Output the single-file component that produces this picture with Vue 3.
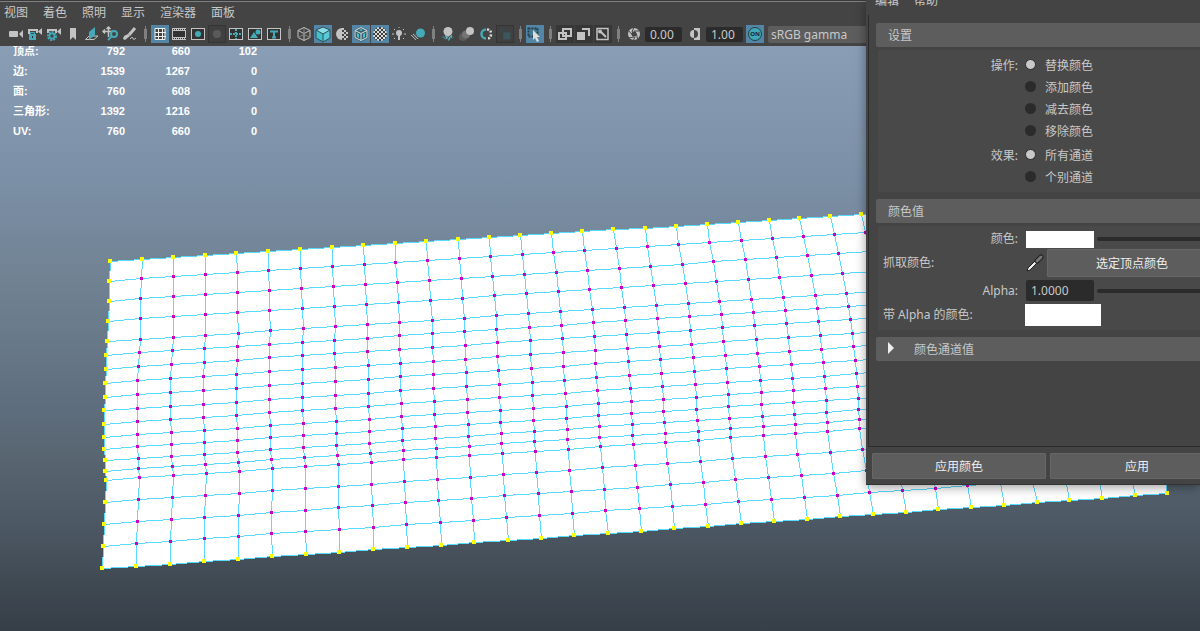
<script setup>
import { ref } from 'vue'

const menus = ['视图', '着色', '照明', '显示', '渲染器', '面板']

const G = '#c3c3c3'
const T = '#45aab8'
const D = '#2b2b2b'
const frame = `<rect x="2.5" y="3.5" width="13" height="11" fill="#333" stroke="${G}"/>`
const wire = (c) => `<path d="M9 2.5 15 5.5V12.5L9 15.5 3 12.5V5.5ZM3 5.5 9 8.5 15 5.5M9 8.5V15.5" fill="none" stroke="${c}"/>`

const groups = [
  [
    { n: '选择摄影机', s: `<rect x="2" y="6" width="9" height="6" rx="1" fill="${G}"/><path d="M16 5v8l-4-4z" fill="${G}"/>` },
    { n: '锁定摄影机', s: `<path d="M3 9V5h8v3" fill="none" stroke="${G}" stroke-width="2"/><path d="M16 3v7l-4-3.500z" fill="${G}"/><rect x="3" y="9" width="7" height="6" fill="${T}"/><path d="M4.500 9V7.500h4V9" fill="none" stroke="${T}"/><rect x="6" y="11" width="1" height="2" fill="${D}"/>` },
    { n: '摄影机属性', s: `<path d="M3 8V5h8v3" fill="none" stroke="${G}" stroke-width="2"/><path d="M16 3v7l-4-3.500z" fill="${G}"/><circle cx="7" cy="11" r="4" fill="#444" stroke="${T}" stroke-width="2" stroke-dasharray="2 1"/><circle cx="7" cy="11" r="2.500" fill="none" stroke="${T}" stroke-width="1.500"/>` },
    { n: '书签', s: `<path d="M6 3h6v12l-3-3-3 3z" fill="${G}"/>` },
    { n: '图像平面', s: `<path d="M2.500 14.500 6 11h9l-4 3.500z" fill="none" stroke="${G}"/><path d="M6 7 12 2v8l-6 5z" fill="${T}"/>` },
    { n: '二维平移/缩放', s: `<path d="M1 6.500h10M6.500 2v10M4.500 4l2-2 2 2M3 4.500l-2 2 2 2" fill="none" stroke="${G}" stroke-width="1.500"/><circle cx="12" cy="9" r="3" fill="#444" stroke="${T}" stroke-width="2"/><path d="m10 11-4 4" stroke="${T}" stroke-width="2"/>` },
    { n: '油性铅笔', s: `<path d="M14 3 8 10" stroke="${G}" stroke-width="3"/><path d="m7 9 2 2-5 4-2-1 1-3z" fill="${G}"/><path d="M9 14q2-3 3-1 0 3 3 0" fill="none" stroke="${G}"/>` }
  ],
  [
    { n: '栅格', on: 1, s: `<path d="M4 3.500h10v11H4zM7.500 3v12M11.500 3v12M4 7.500h11M4 11.500h11" fill="#414141" stroke="#eee"/>` },
    { n: '胶片门', s: `<rect x="2" y="3" width="14" height="12" fill="${G}"/><rect x="3" y="6" width="12" height="6" fill="#333"/><path d="M3 4.500h13M3 13.500h13" stroke="#333" stroke-dasharray="1 1"/>` },
    { n: '分辨率门', s: frame + `<circle cx="9" cy="9" r="3" fill="${T}"/>` },
    { n: '门遮罩', off: 1, s: `<circle cx="9" cy="9" r="4.500" fill="#5a5a5a"/>` },
    { n: '区域图', s: frame + `<path d="M9 4v10M3 9h12" stroke="${T}" stroke-width="2" stroke-dasharray="2 1"/>` },
    { n: '安全动作', s: frame + `<circle cx="12" cy="7" r="2.500" fill="${T}"/><path d="m4 13 4-6 4 6z" fill="${T}"/>` },
    { n: '安全标题', s: frame + `<path d="M5 6.500h8M9 6v7M7 12.500h4" fill="none" stroke="${T}" stroke-width="2"/>` }
  ],
  [
    { n: '线框', s: wire(G) + `<path d="m3 12.500 6-3 6 3M9 3v6" fill="none" stroke="#858585"/>` },
    { n: '着色显示', on: 1, s: `<path d="m9 2 7 3-7 4-7-4z" fill="#88dce6"/><path d="m2 5 7 4v8l-7-4z" fill="#45bfcb"/><path d="m16 5-7 4v8l7-4z" fill="#59cbd6"/><path d="m9 2 7 3v8l-7 4-7-4V5ZM2 5l7 4 7-4M9 9v8" fill="none" stroke="#30515b"/>` },
    { n: '默认材质', s: `<path d="M9 3a6 6 0 0 0 0 12z" fill="${G}"/><path d="M9 3h2v2H9zm2 2h2v2h-2zM9 7h2v2H9zm4 0h2v2h-2zm-2 2h2v2h-2zm-2 2h2v2H9zm4 0h2v2h-2zm-2 2h2v2h-2z" fill="${G}"/>` },
    { n: '着色线框', on: 1, s: `<path d="m9 2 7 3v8l-7 4-7-4V5z" fill="#37616c"/>` + wire('#ddd') + `<path d="m7 5 2-1 2 1-2 1zM5 8l2 1v4l-2-1zm6 1 2-1v4l-2 1z" fill="#45bfcb"/>` },
    { n: '纹理', on: 1, s: `<defs><pattern id="check" width="4" height="4" patternUnits="userSpaceOnUse"><rect width="4" height="4" fill="#3a3a3a"/><path d="M0 0h2v2H0zM2 2h2v2H2z" fill="#ddd"/></pattern></defs><circle cx="9" cy="9" r="7" fill="url(#check)"/>` },
    { n: '使用所有灯光', s: `<circle cx="9" cy="8" r="3" fill="${G}"/><path d="M8 10h2v5H8z" fill="${G}"/><path d="M2 9h2M14 9h2M4 4l1 1M14 4l-1 1M4 14l1-1M14 14l-1-1M9 2v1" stroke="${G}"/>` },
    { n: '阴影', s: `<path d="m2 10 4-2 4 6H6z" fill="#555"/><path d="m2 10 5 5M4 9l5 5" stroke="#aaa"/><circle cx="11.500" cy="8" r="4.500" fill="${T}"/>` }
  ],
  [
    { n: '屏幕空间环境光遮挡', s: `<path d="m3 12 6-2 6 2-6 4z" fill="${T}"/><path d="m4 14 2-3 2 5 2-5 2 4 2-4" stroke="#444" fill="none"/><circle cx="9" cy="6.500" r="4.500" fill="${G}"/><path d="M6 11h1m2 0h1m2 0h1M7 13h1m2 0h1" stroke="${G}"/>` },
    { n: '运动模糊', s: `<circle cx="5" cy="12" r="4" fill="#5c5c5c"/><circle cx="8" cy="9.500" r="4" fill="#747474"/><circle cx="12" cy="6" r="4" fill="${G}"/>` },
    { n: '多采样抗锯齿', s: `<path d="M9 4.500a4.500 4.500 0 0 0 0 9" fill="none" stroke="${T}" stroke-width="2.500"/><path d="M10 4.500q4 0 4 4.500t-4 4.500" fill="none" stroke="#ddd" stroke-width="2.500" stroke-dasharray="2 1.500"/>` },
    { n: '景深', off: 1, s: `<path d="M3 8V3h6v2H5v3z" fill="#384a4f"/><path d="M7 7h8v8H7z" fill="#3a575d"/>` }
  ],
  [
    { n: '隔离选择', on: 1, s: `<rect x="2.500" y="3.500" width="9" height="8" fill="none" stroke="#263a45" stroke-width="2" stroke-dasharray="2 1"/><rect x="4" y="5" width="6" height="5" fill="#427d93"/><path d="M7 5v10l2-2 2 4 2-1-2-4h3z" fill="#ddd"/>` }
  ],
  [
    { n: 'X 射线显示', dk: 1, s: `<path d="M7 4h8v7H7z" fill="none" stroke="${G}" stroke-width="2"/><path d="M3 8h7v6H3z" fill="none" stroke="${G}" stroke-width="2"/>` },
    { n: 'X 射线活动组件', dk: 1, s: `<path d="M7 4h7v7" fill="none" stroke="${G}" stroke-width="2"/><path d="M2 7h8v8H2z" fill="${G}"/>` },
    { n: 'X 射线关节', dk: 1, s: `<path d="M3 3.500h11v11H3z" fill="none" stroke="${G}" stroke-width="1.500"/><circle cx="6" cy="6.500" r="2" fill="${G}"/><path d="m6 6 6 6" stroke="${G}" stroke-width="2"/>` }
  ]
]

const aperture = `<circle cx="10" cy="9" r="6" fill="${G}"/><path d="M10 6h5M12.500 9l1 5M10 12l-5 1M7.500 9 4 5M8 7l2-5M11 12l-2 4" stroke="#444"/><path d="m8.500 6.500 3 0 1.500 2.500-1.500 2.500h-3L7 9z" fill="#444"/>`
const contrast = `<path d="M9 3h6v12H9z" fill="${G}"/><path d="M9 5a4 4 0 0 0 0 8z" fill="${G}"/><path d="M9 5a4 4 0 0 1 0 8z" fill="#444"/>`

const stats = [
  ['顶点:', 792, 660, 102],
  ['边:', 1539, 1267, 0],
  ['面:', 760, 608, 0],
  ['三角形:', 1392, 1216, 0],
  ['UV:', 760, 660, 0]
]

/* Mesh loops in viewport pixels; the loops between two of them are interpolated. */
const top = 46
const loop = (i, ox, oy, xs, ys) => ({ i, p: xs.map((x, k) => [ox + x / 3, oy + ys[k] / 3 - top]) })
const loops = [
  loop(0, 90, 240, [59,57,57,54,51,48,48,45,45,42,42,42,42,45,45,48,45,42,39,36], [63,123,183,243,303,345,387,429,471,510,551,591,627,660,692,720,786,852,917,984]),
  loop(1, 90, 240, [155,154,151,151,151,148,145,142,142,142,142,142,142,145,145,148,145,142,139,138], [57,115,175,235,298,337,379,421,463,505,544,583,619,655,685,712,778,844,910,978]),
  loop(5, 90, 240, [534,535,538,538,541,538,538,538,538,538,538,541,541,541,544,547,547,544,544,545], [33,91,151,211,271,313,352,394,436,478,517,556,592,628,658,685,751,817,880,948]),
  loop(9, 90, 240, [915,916,922,925,928,928,928,931,931,931,934,934,937,937,940,940,943,946,949,951], [9,67,127,187,247,286,328,370,409,451,490,529,565,601,631,658,724,787,853,921]),
  loop(12, 400, 210, [267,271,277,283,289,289,292,292,295,298,298,301,301,304,304,307,310,313,319,323], [81,139,199,256,316,358,397,439,481,523,562,601,637,670,700,730,793,856,922,990]),
  loop(15, 400, 210, [546,553,562,568,577,580,583,586,586,589,592,595,595,598,598,601,607,613,616,623], [63,121,181,238,298,337,379,421,460,502,541,580,616,649,682,709,772,838,901,969]),
  loop(19, 700, 200, [21,28,40,49,58,64,67,70,76,79,82,85,85,88,91,91,97,106,115,123], [72,127,184,244,304,343,382,424,466,505,547,583,619,655,685,712,775,838,904,969]),
  loop(23, 700, 200, [390,403,415,427,439,445,451,457,460,466,469,472,475,475,478,478,487,498,508,519], [48,103,160,220,280,319,358,400,439,481,520,559,595,628,658,685,748,811,877,942])
]
const edge = loops[loops.length - 1].p
loops.push({ i: 32, p: edge.map(([x, y], k) => [x + 9 * (31 + k * 0.09), y - 9 * (2 + k * 0.018)]) })

const cols = []
for (let c = 0; c <= 32; c++) {
  const b = loops.find((l) => l.i >= c)
  const a = b.i === c ? b : loops[loops.indexOf(b) - 1]
  const t = b === a ? 0 : (c - a.i) / (b.i - a.i)
  cols.push(a.p.map(([x, y], k) => [
    Math.round(x + (b.p[k][0] - x) * t),
    Math.round(y + (b.p[k][1] - y) * t)
  ]))
}
const line = (pts) => 'M' + pts.map(([x, y]) => `${x + 0.5} ${y + 0.5}`).join('L')
const rows = cols[0].map((_, k) => cols.map((c) => c[k]))
const wires = [...cols, ...rows].map(line).join('')
const outline = line([...rows[0], ...cols[32], ...[...rows[19]].reverse(), ...[...cols[0]].reverse()]) + 'Z'
let inner = ''
let border = ''
cols.forEach((c, i) => c.forEach(([x, y], k) => {
  if (i === 0 || i === 32 || k === 0 || k === 19) border += `M${x - 2} ${y - 2}h4v4h-4z`
  else inner += `M${x - 1} ${y - 1}h3v3h-3z`
}))

const operation = ref('替换颜色')
const channel = ref('所有通道')
const operations = ['替换颜色', '添加颜色', '减去颜色', '移除颜色']
const channels = ['所有通道', '个别通道']
</script>

<template>
  <div class="app">
    <nav class="menubar">
      <button v-for="m in menus" :key="m">{{ m }}</button>
    </nav>
    <div class="toolbar">
      <template v-for="(g, i) in groups" :key="i">
        <button v-for="b in g" :key="b.n" class="tool" :class="{ on: b.on, off: b.off, dark: b.dk }" :aria-label="b.n">
          <svg viewBox="0 0 18 18" v-html="b.s"></svg>
        </button>
        <span class="sep"></span>
      </template>
      <button class="tool" aria-label="曝光"><svg viewBox="0 0 18 18" v-html="aperture"></svg></button>
      <input class="num" value="0.00" aria-label="曝光值" />
      <button class="tool" aria-label="伽马"><svg viewBox="0 0 18 18" v-html="contrast"></svg></button>
      <input class="num" value="1.00" aria-label="伽马值" />
      <button class="tool on cm" aria-label="颜色管理"><span>ON</span></button>
      <select class="view" aria-label="视图变换"><option>sRGB gamma</option></select>
    </div>

    <main class="viewport">
      <svg class="mesh" shape-rendering="crispEdges" aria-label="多边形网格">
        <path :d="outline" fill="#fff" />
        <path :d="wires" fill="none" stroke="#5adaff" />
        <path :d="inner" fill="#c800c8" />
        <path :d="border" fill="#ff0" />
      </svg>
      <table class="stats">
        <tbody>
          <tr v-for="s in stats" :key="s[0]">
            <th scope="row">{{ s[0] }}</th>
            <td v-for="n in 3" :key="n">{{ s[n] }}</td>
          </tr>
        </tbody>
      </table>
    </main>

    <aside class="dialog">
      <nav class="dialog-menu">
        <button>编辑</button>
        <button>帮助</button>
      </nav>
      <div class="scroll">
        <h2>设置</h2>
        <section class="body settings">
          <div class="group" role="radiogroup" aria-label="操作">
            <span class="label">操作:</span>
            <div class="choices">
              <label v-for="o in operations" :key="o"><input v-model="operation" type="radio" name="operation" :value="o" />{{ o }}</label>
            </div>
          </div>
          <div class="group" role="radiogroup" aria-label="效果">
            <span class="label">效果:</span>
            <div class="choices">
              <label v-for="o in channels" :key="o"><input v-model="channel" type="radio" name="channel" :value="o" />{{ o }}</label>
            </div>
          </div>
        </section>

        <h2>颜色值</h2>
        <section class="body values">
          <div class="row r1">
            <span class="label">颜色:</span>
            <button class="swatch" aria-label="颜色"></button>
            <input class="slider" type="range" aria-label="颜色亮度" value="100" />
          </div>
          <div class="row r2">
            <span class="label start">抓取颜色:</span>
            <svg class="dropper" viewBox="0 0 20 20">
              <path d="M2 18 3 15 11 7l2 2-8 8z" fill="#eee" stroke="#222" />
              <path d="m11 6 3 3" stroke="#222" stroke-width="3" />
              <path d="m12 8 4-4" stroke="#222" stroke-width="5" stroke-linecap="round" />
              <path d="m12 8 4-4" stroke="#777" stroke-width="3" stroke-linecap="round" />
            </svg>
            <button class="btn pick">选定顶点颜色</button>
          </div>
          <div class="row r3">
            <label class="label" for="alpha">Alpha:</label>
            <input id="alpha" class="alpha" value="1.0000" />
            <input class="slider" type="range" aria-label="Alpha 滑块" value="100" />
          </div>
          <div class="row r4">
            <span class="label start">带 Alpha 的颜色:</span>
            <span class="preview"></span>
          </div>
        </section>

        <h2 class="closed">
          <svg viewBox="0 0 6 12"><path d="M0 0 6 6 0 12z" fill="#eee" /></svg>颜色通道值
        </h2>
      </div>
      <footer>
        <button class="btn">应用颜色</button>
        <button class="btn">应用</button>
      </footer>
    </aside>
  </div>
</template>

<style>
body { background: #444; }
</style>

<style scoped>
.app {
  position: relative;
  display: flex;
  flex-direction: column;
  height: 100vh;
  overflow: hidden;
  background: #444;
  color: #c8c8c8;
  font: 12px/20px "Noto Sans", "Noto Sans CJK SC", sans-serif;
}
.app *, .app { box-sizing: border-box; }
button, input, select { margin: 0; padding: 0; border: 0; font: inherit; color: inherit; background: none; }
.menubar {
  flex: none;
  display: flex;
  gap: 15px;
  height: 24px;
  padding: 1px 4px 0;
  border-top: 1px solid #3a3a3a;
  box-shadow: inset 0 1px #808080;
}
.toolbar { flex: none; display: flex; align-items: center; gap: 1px; height: 22px; padding: 0 0 2px 7px; }
.tool { flex: none; width: 18px; height: 18px; }
.tool svg { display: block; width: 18px; height: 18px; }
.on { background: #5285a6; }
.dark { background: #373737; }
.off { background: #404040; border: 1px solid #353535; }
.off svg { width: 16px; height: 16px; }
.sep {
  flex: none;
  width: 10px;
  height: 16px;
  background: linear-gradient(#808080, #808080) center / 3px 10px no-repeat, linear-gradient(#808080, #808080) center / 1px 16px no-repeat;
}
.num { flex: none; width: 37px; height: 15px; margin: 0 2px; padding-left: 5px; border-radius: 2px; background: #2b2b2b; line-height: 15px; }
.cm { display: grid; place-items: center; }
.cm span { width: 14px; height: 14px; border: 1px solid #263c45; border-radius: 50%; background: #3fa9b8; color: #223; font-size: 6px; font-weight: bold; line-height: 12px; }
.view { flex: 1; height: 17px; margin-left: 3px; padding-left: 3px; border-radius: 2px; background: #5d5d5d; appearance: none; line-height: 17px; }
.viewport {
  position: relative;
  flex: 1;
  min-height: 0;
  clip-path: inset(0);
  background: linear-gradient(#899db5, #7b8fa6 23%, #6e808f 43%, #606f80 60%, #586672 70%, #4d5965 81%, #3f4952 92%, #363e48);
}
.mesh { position: absolute; inset: 0; width: 100%; height: 100%; }
.stats { position: relative; margin-top: -5px; border-collapse: collapse; color: #fff; font: bold 11px/20px "Liberation Sans", "Noto Sans CJK SC", sans-serif; }
.stats th { width: 60px; height: 20px; padding: 0 0 0 13px; text-align: left; white-space: nowrap; }
.stats td { width: 65px; padding: 0; text-align: right; }
.stats td:last-child { width: 67px; }

.dialog {
  position: absolute;
  top: 0;
  right: 0;
  left: 866px;
  overflow: hidden;
  padding-left: 2px;
  border-bottom: 1px solid #333;
  background: #444;
  box-shadow: 0 2px 10px rgba(0, 0, 0, 0.4);
}
.dialog-menu { display: flex; gap: 15px; height: 24px; margin-top: -9px; padding-left: 7px; }
.dialog-menu button { height: 20px; }
.scroll { height: 432px; padding: 8px 0 0 7px; border: 1px solid #2b2b2b; border-width: 0 0 1px 1px; }
h2 { display: flex; align-items: center; height: 24px; margin: 0; padding: 2px 0 0 12px; border-radius: 2px 0 0 2px; background: #5d5d5d; font-size: 12px; font-weight: normal; }
.body { margin: 3px 0 7px 2px; background: #494949; }
.settings { display: grid; gap: 2px; padding: 4px 0; }
.group { display: flex; line-height: 22px; }
.label { flex: none; width: 140px; text-align: right; }
.group .label { padding-top: 1px; }
.choices { margin-left: 7px; }
.choices label { display: flex; align-items: center; height: 22px; padding-top: 2px; }
.choices input { width: 11px; height: 11px; margin: 0 9px 4px 0; border-radius: 50%; background: #2b2b2b; appearance: none; }
.choices input:checked { border: 1px solid #2b2b2b; background: #c8c8c8; }
.values { padding: 3px 0 4px; }
.row { display: flex; align-items: center; }
.r1 { height: 20px; }
.r2 { height: 28px; }
.r3 { height: 27px; }
.r4 { height: 22px; }
.start { padding-left: 5px; text-align: left; }
.swatch { flex: none; width: 68px; height: 17px; margin-left: 8px; background: #fff; }
.slider { flex: 1; min-width: 0; height: 4px; margin-left: 3px; border-radius: 2px 0 0 2px; background: #2b2b2b; appearance: none; }
.slider::-webkit-slider-thumb { width: 0; height: 0; appearance: none; }
.dropper { flex: none; width: 20px; height: 20px; margin: 0 2px 0 7px; }
.btn { flex: none; width: 174px; height: 26px; padding-top: 2px; border: 1px solid #676767; border-radius: 1px; background: #5d5d5d; color: #eee; }
.pick { width: 170px; height: 28px; }
.alpha { flex: none; width: 68px; height: 21px; margin-left: 8px; padding-left: 5px; border-radius: 2px; background: #2b2b2b; }
.preview { width: 76px; height: 22px; margin-left: 7px; background: #fff; }
.closed svg { width: 6px; height: 12px; margin: 0 20px 4px 0; }
footer { display: flex; gap: 4px; padding: 6px 0 5px 4px; }
</style>
